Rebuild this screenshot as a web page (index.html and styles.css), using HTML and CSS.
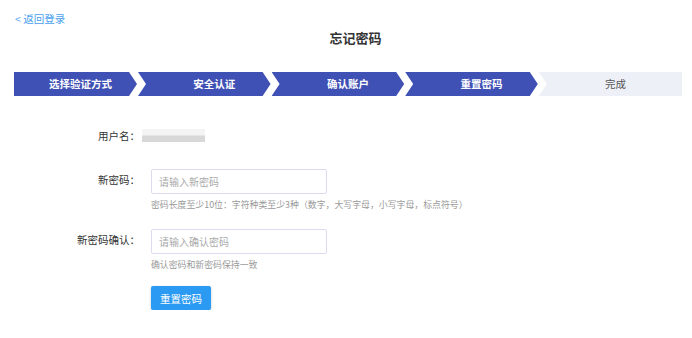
FILE: index.html
```html
<!DOCTYPE html>
<html>
<head>
    <title>忘记密码</title>
    <link rel="stylesheet" href="styles.css">
</head>
<body>
    <div class="page">
        <a class="back" href="#">&lt; 返回登录</a>
        <h1 class="title">忘记密码</h1>

        <div class="steps">
            <div class="step first">选择验证方式</div>
            <div class="step">安全认证</div>
            <div class="step">确认账户</div>
            <div class="step">重置密码</div>
            <div class="step last">完成</div>
        </div>

        <div class="form">
            <div class="row user-row">
                <label>用户名：</label>
                <div class="masked"></div>
            </div>
            <div class="row">
                <label for="newPwd">新密码：</label>
                <div class="field">
                    <input type="password" id="newPwd" placeholder="请输入新密码">
                    <p class="hint">密码长度至少10位：字符种类至少3种（数字，大写字母，小写字母，标点符号）</p>
                </div>
            </div>
            <div class="row">
                <label for="confirmPwd">新密码确认：</label>
                <div class="field">
                    <input type="password" id="confirmPwd" placeholder="请输入确认密码">
                    <p class="hint">确认密码和新密码保持一致</p>
                </div>
            </div>
            <div class="row">
                <label></label>
                <button class="submit">重置密码</button>
            </div>
        </div>
    </div>
</body>
</html>
```

FILE: styles.css
```css
body {
    margin: 0;
    background-color: #ffffff;
    font-family: "Noto Sans CJK SC", "Noto Sans", sans-serif;
    color: #333;
}

.page {
    padding: 12px 10px 0 14px;
}

.back {
    display: block;
    color: #4a9ff0;
    font-size: 10.5px;
    line-height: 14px;
    text-decoration: none;
    margin-left: 1px;
}

.title {
    margin: 3px 0 0;
    padding-left: 15px;
    text-align: center;
    font-size: 13px;
    line-height: 18px;
    font-weight: bold;
    color: #333;
}

.steps {
    display: flex;
    gap: 1px;
    margin-top: 25px;
    height: 24px;
}

.step {
    width: 132.6px;
    flex: none;
    background-color: #3f51b5;
    color: #ffffff;
    font-size: 10.5px;
    font-weight: bold;
    line-height: 24px;
    text-align: center;
    padding-left: 20px;
    box-sizing: border-box;
    clip-path: polygon(0 0, calc(100% - 8px) 0, 100% 50%, calc(100% - 8px) 100%, 0 100%, 8px 50%);
}

.step.first {
    width: 123px;
    padding-left: 10px;
    clip-path: polygon(0 0, calc(100% - 8px) 0, 100% 50%, calc(100% - 8px) 100%, 0 100%);
}

.step.last {
    flex: 1;
    width: auto;
    padding-left: 10px;
    background-color: #eef0f8;
    color: #555;
    font-weight: normal;
    clip-path: polygon(0 0, 100% 0, 100% 100%, 0 100%, 8px 50%);
}

.form {
    margin-top: 27px;
}

.row {
    display: flex;
    align-items: flex-start;
}

.row label {
    width: 126px;
    flex: none;
    text-align: right;
    font-size: 10.5px;
    line-height: 25px;
    color: #333;
}

.user-row {
    margin-bottom: 18px;
}

.user-row label {
    line-height: 26px;
}

.masked {
    width: 63px;
    height: 13px;
    margin-top: 6px;
    margin-left: 2px;
    background: linear-gradient(to bottom, #f4f4f4 0, #f4f4f4 45%, #d8d8d8 55%, #d8d8d8 100%);
    filter: blur(0.6px);
}

.field {
    margin-left: 11px;
}

input {
    width: 176px;
    height: 25px;
    box-sizing: border-box;
    border: 1px solid #dcdcf0;
    border-radius: 2px;
    padding: 0 7px;
    font-family: inherit;
    font-size: 10px;
    outline: none;
}

input::placeholder {
    color: #aaa;
}

.hint {
    margin: 4px 0 0;
    font-size: 8.9px;
    line-height: 14px;
    color: #999;
    white-space: nowrap;
}

.row + .row {
    margin-top: 15px;
}

.user-row + .row {
    margin-top: 0;
}

.submit {
    margin-left: 11px;
    margin-top: -1px;
    width: 60px;
    height: 24px;
    border: none;
    border-radius: 2px;
    background-color: #2b9af3;
    color: #ffffff;
    font-family: inherit;
    font-size: 10.5px;
    box-shadow: 0 1px 3px rgba(0, 0, 0, 0.2);
    cursor: pointer;
}
```
